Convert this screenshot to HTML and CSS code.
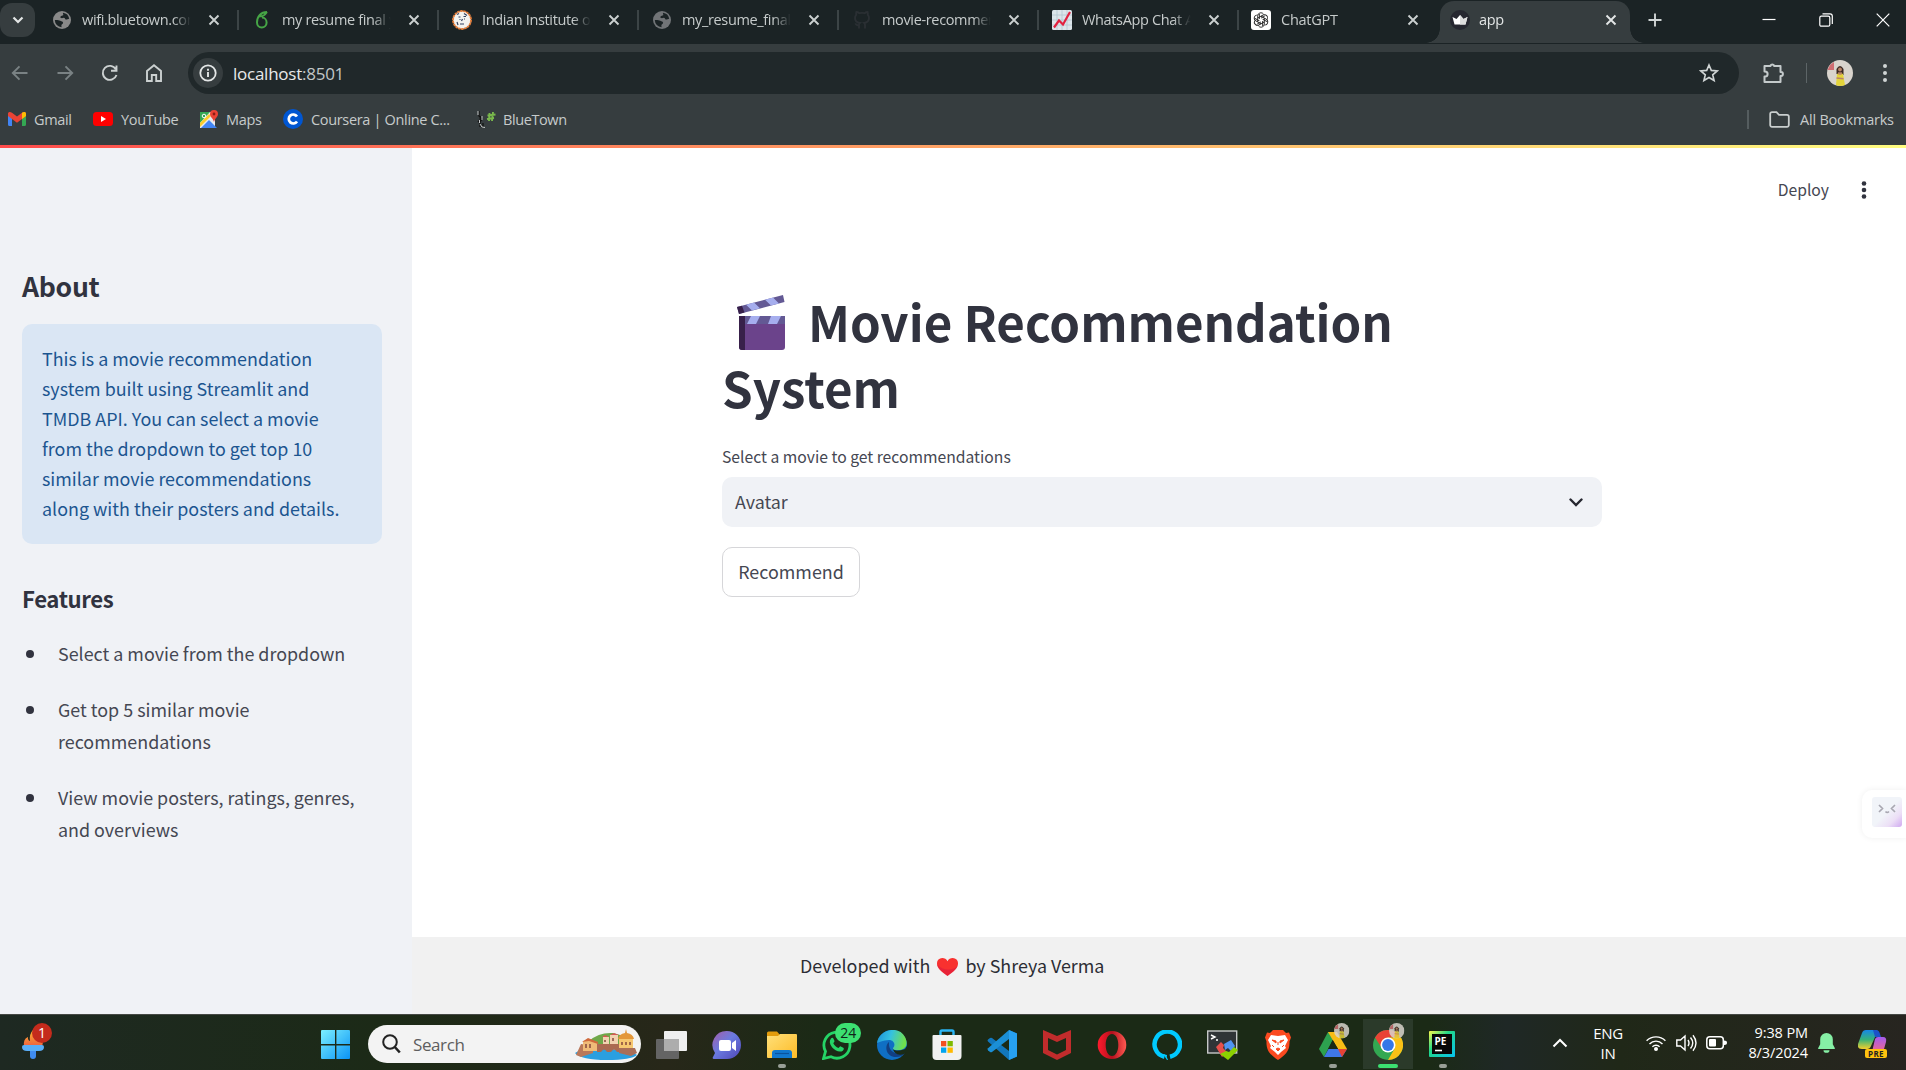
FILE: index.html
```html
<!DOCTYPE html>
<html lang="en">
<head>
<meta charset="utf-8">
<title>app</title>
<link rel="stylesheet" href="styles.css">
</head>
<body>
<svg class="defs" width="0" height="0" aria-hidden="true">
  <defs>
    <symbol id="x" viewBox="0 0 12 12"><path d="M1.5 1.5l9 9M10.5 1.5l-9 9" fill="none" stroke="currentColor" stroke-width="1.9"/></symbol>
    <symbol id="globe" viewBox="0 0 18 18"><circle cx="9" cy="9" r="9" fill="currentColor"/><path d="M10 1.8a7.3 7.3 0 0 1 6.2 6c-1.600.3-2.700 1.200-3.600.6-.8-.5-.5-1.700-1.700-1.700-1 0-1.600.8-2.700.4C7 6.700 7.100 5.700 8.200 5c.8-.4 2-.1 2.100-1.200.1-.8-.6-1.200-.3-2zM1.800 9c1.800-.3 4.200.1 5.500.7 1.400.6 2.700.7 2.800 2 .1 1.300-1.500 1.400-1.700 2.600-.1.700.2 1.300.2 1.900A7.300 7.300 0 0 1 1.800 9z" fill="#1b2325"/></symbol>
    <symbol id="avatar" viewBox="0 0 26 26"><circle cx="13" cy="13" r="13" fill="#d9d4cd"/><path d="M3 5l4-3v8H.5z" fill="#cf6d72"/><path d="M9.500 14V9q3.500-6 7 0v6z" fill="#3b2923"/><circle cx="13" cy="9.500" r="1.900" fill="#b98468"/><path d="M10 14q3-2 6 0l2 11q-5 2-9 0z" fill="#e3d43a"/><path d="M9.500 18l7 .8M12 12v2h2v-2" stroke="#b98468" stroke-width="1.400" fill="none"/></symbol>
    <linearGradient id="gWin" x1="0" y1="0" x2="1" y2="1"><stop offset="0" stop-color="#7cf0ff"/><stop offset="1" stop-color="#0a93f5"/></linearGradient>
    <linearGradient id="gChat" x1="0" y1="0" x2="1" y2="1"><stop offset="0" stop-color="#a45da8"/><stop offset=".45" stop-color="#6b7be0"/><stop offset="1" stop-color="#4f46b8"/></linearGradient>
    <linearGradient id="gFold" x1="0" y1="0" x2="1" y2="1"><stop offset="0" stop-color="#ffe07a"/><stop offset="1" stop-color="#fdbb26"/></linearGradient>
    <linearGradient id="gEdge" x1="0" y1="0" x2="1" y2=".2"><stop offset="0" stop-color="#1b8fd8"/><stop offset=".5" stop-color="#35c1e0"/><stop offset="1" stop-color="#6fe04d"/></linearGradient>
    <linearGradient id="gCop" x1="0" y1="0" x2="0" y2="1"><stop offset="0" stop-color="#1687e8"/><stop offset=".5" stop-color="#35b27a"/><stop offset="1" stop-color="#f4cf2b"/></linearGradient>
    <linearGradient id="gCop2" x1="0" y1="0" x2="0" y2="1"><stop offset="0" stop-color="#a35cf0"/><stop offset="1" stop-color="#f2688a"/></linearGradient>
    <linearGradient id="gOpera" x1="0" y1="0" x2="1" y2="0"><stop offset="0" stop-color="#ff1b2d"/><stop offset=".5" stop-color="#b3101d"/><stop offset="1" stop-color="#ff5a52"/></linearGradient>
    <linearGradient id="gPy" x1="0" y1="0" x2="1" y2="1"><stop offset="0" stop-color="#fcf84a"/><stop offset=".4" stop-color="#21d789"/><stop offset="1" stop-color="#07c3f2"/></linearGradient>
    <linearGradient id="gFace" x1="0" y1="0" x2="1" y2="1"><stop offset=".5" stop-color="#f1f4f9"/><stop offset=".75" stop-color="#ecdff6"/><stop offset="1" stop-color="#cfa8f0"/></linearGradient>
    <linearGradient id="gTorch" x1="0" y1="0" x2="0" y2="1"><stop offset="0" stop-color="#fcb52f"/><stop offset="1" stop-color="#f0623f"/></linearGradient>
  </defs>
</svg>

<header class="browser">
  <div class="tabstrip">
    <button class="tabsearch"><svg width="12" height="8" viewBox="0 0 12 8"><path d="M1.500 1.500L6 6l4.500-4.500" fill="none" stroke="#e3e6e6" stroke-width="2.200"/></svg></button>
    <div class="tab"><svg class="fav" color="#898989"><use href="#globe"/></svg><span class="name">wifi.bluetown.com</span><svg class="x"><use href="#x"/></svg></div>
    <div class="tab"><svg class="fav" viewBox="0 0 18 18"><path d="M14 1C8 1 4 5.500 4 11.500a4.800 5 0 1 0 5-5M6.500 5c2.500 1 5-.5 7.500-4" fill="none" stroke="#46a546" stroke-width="2"/></svg><span class="name">my resume final y</span><svg class="x"><use href="#x"/></svg></div>
    <div class="tab"><svg class="fav big" viewBox="0 0 20 20"><circle cx="10" cy="10" r="9" fill="#f3f3f0" stroke="#e8803c" stroke-width="1.800" stroke-dasharray="2.500 .6"/><path d="M6.500 7h2M11.500 6.500h2.500M7.500 9.500h1M12 9h1M9.500 11l1-2M8 14h4M5 4.500l2-1M12 3.500l3 2M5 12l1 3" stroke="#33415f" stroke-width="1.200"/></svg><span class="name">Indian Institute of</span><svg class="x"><use href="#x"/></svg></div>
    <div class="tab"><svg class="fav" color="#717477"><use href="#globe"/></svg><span class="name">my_resume_final_</span><svg class="x"><use href="#x"/></svg></div>
    <div class="tab"><svg class="fav big" viewBox="0 0 20 20"><path d="M7 18.500v-3M13 18.500v-3.500c0-1-.3-1.600-.8-2 3-.4 4.800-1.800 4.800-5 0-1.300-.4-2.300-1.200-3.100.2-1 .1-2-.2-2.900-1.200 0-2.200.6-3 1.200a10 10 0 0 0-5.200 0c-.8-.6-1.800-1.200-3-1.200-.3.900-.4 1.900-.2 2.900C3.400 5.700 3 6.700 3 8c0 3.200 1.800 4.600 4.800 5-.5.400-.8 1-.8 2-2 .6-3-.1-3.800-1.700" fill="none" stroke="#2a2f33" stroke-width="1.900"/></svg><span class="name">movie-recommend</span><svg class="x"><use href="#x"/></svg></div>
    <div class="tab"><svg class="fav big" viewBox="0 0 20 20"><rect width="20" height="20" rx="1.500" fill="#dce5ea"/><path d="M5 0v20M10 0v20M15 0v20M0 5h20M0 10h20M0 15h20" stroke="#b4c6d0" stroke-width=".8"/><path d="M2 17.500l5-7 4 4L18 2" fill="none" stroke="#e1213f" stroke-width="2.200"/></svg><span class="name tight">WhatsApp Chat A</span><svg class="x"><use href="#x"/></svg></div>
    <div class="tab last"><svg class="fav big" viewBox="0 0 20 20"><rect width="20" height="20" rx="3" fill="#fff"/><g fill="none" stroke="#222" stroke-width=".9"><path id="pt" d="M6.700 11.900V6a3.200 3.200 0 0 1 6-1.600M10 8.100l4.300-2.500"/><use href="#pt" transform="rotate(60 10 10)"/><use href="#pt" transform="rotate(120 10 10)"/><use href="#pt" transform="rotate(180 10 10)"/><use href="#pt" transform="rotate(240 10 10)"/><use href="#pt" transform="rotate(300 10 10)"/></g></svg><span class="name">ChatGPT</span><svg class="x"><use href="#x"/></svg></div>
    <div class="tab active"><svg class="fav big" viewBox="0 0 20 20"><circle cx="10" cy="10" r="10" fill="#262730"/><path d="M2.500 7l4 2L10 5l3.500 4 4-2-2 7.500h-11z" fill="#fff"/><path d="M10 5l3.500 4 4-2-2 7.500H10z" fill="#ddd"/></svg><span class="name">app</span><svg class="x"><use href="#x"/></svg></div>
    <svg class="plus" width="14" height="14" viewBox="0 0 14 14"><path d="M7 .5v13M.5 7h13" stroke="#d0d5d5" stroke-width="1.900"/></svg>
    <div class="winbtns">
      <svg width="14" height="14" viewBox="0 0 14 14"><path d="M.5 6.500h13" stroke="#fff" stroke-width="1.200"/></svg>
      <svg width="14" height="14" viewBox="0 0 14 14"><rect x=".8" y="3.200" width="10" height="10" rx="1.500" fill="none" stroke="#fff" stroke-width="1.200"/><path d="M3.500 .8h7.500a2.300 2.300 0 0 1 2.300 2.300V11" fill="none" stroke="#fff" stroke-width="1.200"/></svg>
      <svg width="14" height="14" viewBox="0 0 14 14"><path d="M.7.700l12.600 12.600M13.300.700L.7 13.300" stroke="#fff" stroke-width="1.200"/></svg>
    </div>
  </div>

  <div class="toolbar">
    <div class="nav">
      <svg width="18" height="16" viewBox="0 0 18 16" stroke="#7a8284"><path d="M16.500 8H2M8.500 1.300L1.800 8l6.700 6.700"/></svg>
      <svg width="18" height="16" viewBox="0 0 18 16" stroke="#7a8284"><path d="M1.500 8H16M9.500 1.300L16.200 8l-6.700 6.700"/></svg>
      <svg width="18" height="18" viewBox="0 0 18 18" stroke="#ccd1d1"><path d="M14.800 5.200A7 7 0 1 0 15.500 11M15.500 1.500v5.300h-5.500"/></svg>
      <svg width="18" height="18" viewBox="0 0 18 18" stroke="#ccd1d1"><path d="M2 17V7l7-5.700L16 7v10h-4.800v-6H6.800v6z"/></svg>
    </div>
    <div class="omnibox">
      <span class="info"><svg width="18" height="18" viewBox="0 0 18 18"><circle cx="9" cy="9" r="7.700" fill="none" stroke="#e3e6e6" stroke-width="1.800"/><path d="M9 8v5M9 4.800v2" stroke="#e3e6e6" stroke-width="1.900"/></svg></span>
      <span class="url">localhost<i>:8501</i></span>
      <svg class="star" width="20" height="20" viewBox="0 0 20 20"><path d="M10 2l2.300 5.400 5.900.5-4.500 3.900 1.400 5.700L10 14.500l-5.100 3 1.400-5.700-4.500-3.900 5.900-.5z" fill="none" stroke="#d0d5d5" stroke-width="1.600"/></svg>
    </div>
    <svg class="puzzle" width="22" height="22" viewBox="0 0 22 22"><path d="M2.500 4h6V3.500a2 1.800 0 0 1 3.600 0V4h6.400v6h.6a1.800 2 0 0 1 0 4h-.6v6h-16v-5.500h.6a2.500 2.500 0 0 0 0-5h-.6z" fill="none" stroke="#c4cacb" stroke-width="2" stroke-linejoin="round"/></svg>
    <span class="vsep"></span>
    <svg class="face" width="26" height="26"><use href="#avatar"/></svg>
    <svg class="kebab" width="6" height="20" viewBox="0 0 6 20" fill="#d0d5d5"><circle cx="3" cy="3" r="2"/><circle cx="3" cy="10" r="2"/><circle cx="3" cy="17" r="2"/></svg>
  </div>

  <div class="bookmarks">
    <svg width="18" height="14" viewBox="0 0 18 14"><path d="M0 1.500h4V14H1.500A1.500 1.500 0 0 1 0 12.500z" fill="#4285f4"/><path d="M14 1.500h4v11a1.500 1.500 0 0 1-1.500 1.500H14z" fill="#34a853"/><path d="M0 1.500C.5-.3 2.500-.3 4 .8L9 4.600 14 .8c1.500-1.100 3.500-1.100 4 .7V4l-9 6.700L0 4z" fill="#ea4335"/><path d="M14 .8c1.500-1.100 3.500-1.100 4 .7V4l-4 3z" fill="#fbbc04"/></svg><span class="b1">Gmail</span>
    <svg width="20" height="14" viewBox="0 0 20 14"><rect width="20" height="14" rx="3.500" fill="#f00"/><path d="M8 4l5 3-5 3z" fill="#fff"/></svg><span class="b2">YouTube</span>
    <svg width="18" height="18" viewBox="0 0 18 18"><path d="M0 2h15v16H0z" fill="#e8eaed"/><path d="M0 2h10L0 13z" fill="#34a853"/><path d="M1 18l8-8 8 8z" fill="#4285f4"/><path d="M0 13l9-9 2 2-11 11z" fill="#fbcd2c"/><path d="M14 0a4 4 0 0 1 4 4c0 3-3 4-4 8-1-4-4-5-4-8a4 4 0 0 1 4-4z" fill="#ea4335"/><circle cx="14" cy="4" r="1.400" fill="#8c1d14"/><circle cx="4" cy="6" r="1.800" fill="none" stroke="#fff"/></svg><span class="b3">Maps</span>
    <svg width="20" height="20" viewBox="0 0 20 20"><circle cx="10" cy="10" r="10" fill="#0056d2"/><path d="M14 7.500a4.500 4.500 0 1 0 0 5" fill="none" stroke="#fff" stroke-width="2.700"/></svg><span class="b4">Coursera | Online C...</span>
    <svg width="19" height="19" viewBox="0 0 19 19"><path d="M2 1v5l3 3-2 3v5M4 6l-1 3M6 13v5M1 12l3-3" stroke="#111" stroke-width="1.300" fill="none"/><path d="M1 1v4M5 6v4M3 14l2 3 3 .5M2.500 10v3" stroke="#c6caca" stroke-width="1" fill="none"/><path d="M12.500 3l-.5 8M16 2l-1 9M10.500 5.500l8-1M10 9l7-1" stroke="#79b84c" stroke-width="1.900"/></svg><span class="b5">BlueTown</span>
    <span class="allsep"></span>
    <svg width="21" height="17" viewBox="0 0 21 17"><path d="M1.200 3A1.800 1.800 0 0 1 3 1.200h4.500L10 3.800h8A1.800 1.800 0 0 1 19.800 5.600V14A1.800 1.800 0 0 1 18 15.800H3A1.800 1.800 0 0 1 1.200 14z" fill="none" stroke="#c9cece" stroke-width="1.800"/></svg><span class="all">All Bookmarks</span>
  </div>
</header>
<div class="decoration"></div>

<div class="app">
  <aside class="sidebar">
    <h2>About</h2>
    <p class="note">This is a movie recommendation<br>system built using Streamlit and<br>TMDB API. You can select a movie<br>from the dropdown to get top 10<br>similar movie recommendations<br>along with their posters and details.</p>
    <h3>Features</h3>
    <ul>
      <li>Select a movie from the dropdown</li>
      <li>Get top 5 similar movie<br>recommendations</li>
      <li>View movie posters, ratings, genres,<br>and overviews</li>
    </ul>
  </aside>
  <main class="main">
    <div class="appbar"><span>Deploy</span><svg width="6" height="18" viewBox="0 0 6 18" fill="#31333f"><circle cx="3" cy="2.500" r="2.300"/><circle cx="3" cy="9" r="2.300"/><circle cx="3" cy="15.500" r="2.300"/></svg></div>
    <section class="block">
      <h1><svg class="clap" width="50" height="56" viewBox="0 0 50 56"><path d="M3 46V23h46v29a3 3 0 0 1-3 3H6a3 3 0 0 1-3-3z" fill="#6b438b"/><path d="M3 21h6v34H6a3 3 0 0 1-3-3z" fill="#38204a"/><path d="M9 21h40v8H9z" fill="#635994"/><path d="M15 21h9l-4 8h-9zM35 21h10l-4 8h-9z" fill="#a6aeee"/><path d="M1 12L47 0l1.500 7L3 19z" fill="#635994"/><path d="M1 12l5-1.300L8.500 17.500 3 19z" fill="#38204a"/><path d="M10 9.700l8-2.100 6 5.600-8 2.200zM29 4.700l8-2.100 6 5.800-8 2.200z" fill="#a6aeee"/></svg><span>Movie Recommendation</span><br><span>System</span></h1>
      <label>Select a movie to get recommendations</label>
      <div class="select"><span>Avatar</span><svg width="14" height="9" viewBox="0 0 14 9"><path d="M1.500 1.500L7 7l5.500-5.500" fill="none" stroke="#262730" stroke-width="2.400" stroke-linecap="round"/></svg></div>
      <button class="recommend">Recommend</button>
    </section>
    <footer>
      <span>Developed with</span><svg width="21" height="18" viewBox="0 0 21 18"><path d="M10.500 18C4 13 0 10 0 5.400A5.200 5.200 0 0 1 5.200 0c2.300 0 4.300 1.200 5.300 3.200C11.500 1.200 13.500 0 15.800 0A5.200 5.200 0 0 1 21 5.400C21 10 17 13 10.500 18z" fill="#f8312f"/><path d="M0 6c.5 4 4 7 10.500 12C15 14.500 19 12 20.500 8 16 13 5 13 0 6z" fill="#ca0b4a" opacity=".35"/></svg><span>by Shreya Verma</span>
    </footer>
  </main>
</div>

<div class="assistant"><svg width="32" height="32" viewBox="0 0 32 32"><rect x="1" y="1" width="30" height="30" rx="3" fill="url(#gFace)"/><path d="M8 9l3.500 3.500L8 16M24 9l-3.500 3.500L24 16M14.500 15.500q1.700 2 3.400 0" fill="none" stroke="#a9a8b2" stroke-width="1.700"/></svg></div>

<div class="taskbar">
  <div class="widget"><svg width="26" height="30" viewBox="0 0 26 30"><path d="M4 16Q3 9 8 7q-.5 3 2 4Q9 4 13 0l8 8q3 4 1 8z" fill="url(#gTorch)"/><path d="M2 17q0-2 2-2h18q2 0 2 2 0 4-5 4H7q-5 0-5-4z" fill="#5aaef8"/><path d="M10 21h6v5q0 3-3 3t-3-3z" fill="#3f8cf0"/></svg><b class="badge">1</b></div>
  <svg class="start" width="30" height="30" viewBox="0 0 30 30" fill="url(#gWin)"><path d="M0 1a1 1 0 0 1 1-1h13v14H0zM15.400 0H28a1 1 0 0 1 1 1v13H15.400zM0 15.400h14V29H1a1 1 0 0 1-1-1zM15.400 15.400H29V28a1 1 0 0 1-1 1H15.400z"/></svg>
  <div class="search"><svg width="19" height="20" viewBox="0 0 19 20"><circle cx="8" cy="8" r="6.800" fill="none" stroke="#222" stroke-width="2"/><path d="M12.800 13l5 5.500" stroke="#222" stroke-width="2.600"/></svg><span>Search</span>
    <svg class="town" width="62" height="31" viewBox="0 0 62 31"><path d="M14 12Q24 3 38 4l14 4v12H12z" fill="#6fa84a"/><path d="M0 24l9-5 45 2 8 5q-6 5-30 5-26 0-32-7z" fill="#2a9fe0"/><path d="M6 15l12 2v7l-12 4-5-2z" fill="#b9785a"/><path d="M8 12l5-2 9 3v9H8z" fill="#f0bb78"/><path d="M7 13l6-4 10 4v2l-9-3z" fill="#cf6a3c"/><path d="M22 15h24v8h-4q-3-5-6 0h-4q-3-5-6 0h-4z" fill="#ab6a51"/><path d="M28 8h6v7h-6zM35 6h8v9h-8z" fill="#f2d2b0"/><path d="M27 8l3-2 4 2zM35 6l4-2 5 2z" fill="#d35a55"/><path d="M44 9h14v11H44z" fill="#f6c771"/><path d="M43 10q1-5 7-6l1-4 1 4q6 1 7 6z" fill="#e3973a"/><path d="M44 19l16 0 2 5-6 3-12-3z" fill="#a96e58"/><path d="M11 15v4M15 15v4M30 11v2M38 9v3M47 13v3M51 13v3M55 13v3" stroke="#85483c" stroke-width="1.500"/></svg>
  </div>
  <div class="apps">
    <div><svg width="31" height="30" viewBox="0 0 31 30"><rect x="0" y="9" width="23" height="20" rx="1" fill="#646464"/><rect x="8" y="1" width="23" height="20" rx="1" fill="#efefef"/><path d="M8 9h15v12H8z" fill="#adadad"/></svg></div>
    <div><svg width="30" height="30" viewBox="0 0 30 30"><path d="M15 1a14 14 0 1 1 0 28H2q-2 0-1-2l2-4A14 14 0 0 1 15 1z" fill="url(#gChat)"/><rect x="7" y="10" width="12" height="11" rx="2" fill="#fff"/><path d="M20 13l4-3v11l-4-3z" fill="#fff"/></svg></div>
    <div class="run"><svg width="30" height="30" viewBox="0 0 30 30"><path d="M0 3a1.500 1.500 0 0 1 1.500-1.500H10L13 5v4H0z" fill="#e39c0c"/><path d="M0 6h11l2-2h16a1 1 0 0 1 1 1v22a1 1 0 0 1-1 1H1a1 1 0 0 1-1-1z" fill="url(#gFold)"/><path d="M5 28v-5q0-3 3-3h14q3 0 3 3v5z" fill="#1178cf"/><path d="M8 23.500h14" stroke="#0a539e" stroke-width="1.200"/></svg></div>
    <div><svg width="30" height="30" viewBox="0 0 30 30"><path d="M1.500 28.500l2-7.200A13 13 0 1 1 9 26.700z" fill="none" stroke="#25d366" stroke-width="2.800"/><path d="M9 8.500c1-1 2-.8 2.500.2l1 2.300c.2.800-1 1.800-1.200 2.300 1 2.200 2.800 3.800 5.200 4.700.8-.3 1.300-2 2.300-1.600l2.500 1.300c1 .5.300 2.300-.5 3-3 2.500-8.500-.6-10.800-3.500C7.500 14 7 11 9 8.500z" fill="#25d366"/></svg><b class="badge green">24</b></div>
    <div><svg width="30" height="30" viewBox="0 0 30 30"><circle cx="15" cy="15" r="15" fill="#0f6fc4"/><path d="M0 13C2-1 22-5 28 7c4 8 0 12-5 13-5 .6-8-.7-7-2 3-3 1-8-4-8-6 0-11 3-12 3z" fill="url(#gEdge)"/><path d="M12 12c-5 4-3 15 7 15 4 0 6-1 8-3 1-2 0-2-2-1-7 2-14-2-13-11z" fill="#123f82"/><path d="M16 18c-1 2 4 4 12 1l2-3v6l-3 2c-6 2-11-1-11-6z" fill="#1a2b17"/></svg></div>
    <div><svg width="30" height="31" viewBox="0 0 30 31"><path d="M8.500 7V3q0-1.500 1.500-1.500h10q1.500 0 1.500 1.500v4" fill="none" stroke="#2ab4f4" stroke-width="2.400"/><path d="M.5 7q0-1 1-1h27q1 0 1 1v20a4 4 0 0 1-4 4h-21a4 4 0 0 1-4-4z" fill="#f1f1f1"/><path d="M9 12h5.300v5.300H9z" fill="#f25022"/><path d="M15.500 12h5.300v5.300h-5.300z" fill="#7fba00"/><path d="M9 18.500h5.300v5.300H9z" fill="#00a4ef"/><path d="M15.500 18.500h5.300v5.300h-5.300z" fill="#ffb900"/></svg></div>
    <div><svg width="30" height="30" viewBox="0 0 30 30"><path d="M22 0l8 3.500v23L22 30 1 11.500q-1-1 0-2L3 8q1-.6 2 0l17 13z" fill="#1277bd"/><path d="M22 0v9L5 22q-1 .7-2 0l-2-1.700q-1-1 0-2z" fill="#1b8fd6"/><path d="M22 0l8 3.500v23L22 30z" fill="#27a1f2"/></svg></div>
    <div><svg width="28" height="30" viewBox="0 0 28 30"><path d="M0 0l14 6L28 0v23l-14 7-14-7zM5 8v12l9 4.500 9-4.500V8l-9 4z" fill="#c12c2c" fill-rule="evenodd"/></svg></div>
    <div><svg width="30" height="30" viewBox="0 0 30 30"><path d="M15 1a14.300 14 0 1 0 0 28 14.300 14 0 0 0 0-28zM15 4c4 0 6.300 5 6.300 11S19 26 15 26 8.700 21 8.700 15 11 4 15 4z" fill="url(#gOpera)" fill-rule="evenodd"/></svg></div>
    <div><svg width="30" height="30" viewBox="0 0 30 30"><path d="M12.500 26.700A12.700 12.700 0 1 1 18 26.700" fill="none" stroke="#00caff" stroke-width="4.500"/><path d="M11 24l4 6h1q-2-3-1-5z" fill="#00caff"/></svg></div>
    <div><svg width="31" height="30" viewBox="0 0 31 30"><rect x=".7" y="1" width="29" height="22" fill="#303437" stroke="#c6c8c8" stroke-width="1.400"/><path d="M4 5l4 2-4 2M9 10h2" stroke="#fff" fill="none" stroke-width="1.400"/><path d="M9 17l5-5 3 3-1 3 4 4-5 5z" fill="#e8504c"/><path d="M17 14l7-4 4 6-4 5-3-3-3 2z" fill="#5094f2"/><path d="M13 24l6-3 3 1 5-5 4 3-10 10z" fill="#8bd100"/></svg></div>
    <div><svg width="26" height="30" viewBox="0 0 26 30"><path d="M8 0h10l3 3 3-.5 2 5-1.500 4c.5 10-5 14-11.500 18.500C6.500 25.500 1 21.500 1.500 11.500L0 7.500l2-5L5 3z" fill="#fb4a20"/><path d="M6 5l7 1 7-1 3 5-3 6 1 2-5 4-3 3-3-3-5-4 1-2-3-6z" fill="#fff"/><path d="M7 10l4 1v2zM19 10l-4 1v2zM11 19l2-1 2 1-2 2zM13 12v3M7 15l2 2M19 15l-2 2" fill="#fb4a20" stroke="#fb4a20"/></svg></div>
    <div class="run"><svg width="28" height="26" viewBox="0 0 28 26"><path d="M9 0h9L5 25 0 17z" fill="#2da14f"/><path d="M9 0h9l10 17h-9z" fill="#f8bc15"/><path d="M5 25l4.500-8H28l-5 8z" fill="#3f78e8"/><path d="M19 17h9l-5 8z" fill="#e64234"/><path d="M13.700 8l5.300 9H9z" fill="#1b2a16"/></svg><svg class="mini"><use href="#avatar"/></svg></div>
    <div class="current"><svg width="30" height="30" viewBox="0 0 30 30"><circle cx="15" cy="15" r="15" fill="#33a852"/><path d="M2 7.500A15 15 0 0 1 28 7.500H15L9 18.500z" fill="#e94335"/><path d="M28 7.500A15 15 0 0 1 15 30l6.500-11.200L15 7.500z" fill="#fbc116"/><circle cx="15" cy="15" r="7.500" fill="#fff"/><circle cx="15" cy="15" r="5.900" fill="#3577e8"/></svg><svg class="mini"><use href="#avatar"/></svg></div>
    <div class="run"><svg width="27" height="27" viewBox="0 0 27 27"><rect width="26" height="26" rx="1" fill="url(#gPy)"/><rect x="3" y="3" width="20" height="20" fill="#080808"/><path d="M6 19.500h7" stroke="#fff" stroke-width="1.600"/><text x="5.500" y="13.500" fill="#fff" font-family="Open Sans, sans-serif" font-size="10" font-weight="700">PE</text></svg></div>
  </div>
  <div class="tray">
    <svg width="16" height="10" viewBox="0 0 16 10"><path d="M1.500 8.500L8 2l6.500 6.500" fill="none" stroke="#fff" stroke-width="2"/></svg>
    <div class="lang">ENG<br>IN</div>
    <svg class="wifi" width="20" height="16" viewBox="0 0 20 16" fill="none" stroke="#fff" stroke-width="1.400"><path d="M.6 5.800a13.300 13.300 0 0 1 18.800 0M3.500 8.900a9 9 0 0 1 13 0M6.400 11.800a5 5 0 0 1 7.200 0"/><circle cx="10" cy="14" r="1.300" fill="#fff"/></svg>
    <svg class="vol" width="21" height="18" viewBox="0 0 21 18" fill="none" stroke="#fff" stroke-width="1.400"><path d="M.8 6v6h3.700L9 16V2L4.500 6zM12 6q2 3 0 6M14.500 3.500q4.500 5.500 0 11M17 1.300q6 7.700 0 15.400"/></svg>
    <svg class="bat" width="21" height="14" viewBox="0 0 21 14"><rect x=".8" y=".8" width="16.500" height="12" rx="3" fill="none" stroke="#fff" stroke-width="1.500"/><rect x="3" y="3" width="7" height="7.600" rx="1" fill="#fff"/><path d="M18 4.500q3 0 3 2.300t-3 2.200z" fill="#fff"/></svg>
    <div class="clock">9:38 PM<br>8/3/2024</div>
    <svg class="bell" width="17" height="20" viewBox="0 0 17 20"><path d="M8.500 0a6.300 6.300 0 0 1 6.300 6.300v5l2 3.700q.3 1-.8 1H1q-1.100 0-.8-1l2-3.700v-5A6.300 6.300 0 0 1 8.500 0zM5.500 17.200h6a3 2.600 0 0 1-6 0z" fill="#86efa5"/></svg>
    <div class="copilot"><svg width="30" height="28" viewBox="0 0 30 28"><path d="M8 1h9q3 0 4 3l1 4h-5l-4 9q-1 3-4 3H4q-5 0-4-5L4 4q1-3 4-3z" fill="url(#gCop)"/><path d="M15 1h3q3 0 4 4l1 3h-6z" fill="#1c52c8"/><path d="M17 10q1-2 3-2h5q4 0 3 5l-2 7q-1 3-4 3h-8z" fill="url(#gCop2)"/></svg><b>PRE</b></div>
  </div>
</div>
</body>
</html>
```

FILE: styles.css
```css
* { box-sizing: border-box; }
body {
  margin: 0;
  width: 1906px;
  height: 1070px;
  overflow: hidden;
  display: flex;
  flex-direction: column;
  position: relative;
  font-family: "Open Sans", "Noto Sans", sans-serif;
}
svg { display: block; flex: none; }
.defs { position: absolute; }
button { font: inherit; border: 0; padding: 0; }
i { font-style: normal; }

/* Browser window */
.browser { height: 145px; flex: none; background: #363d3f; color: #c6cbcb; }
.tabstrip { height: 44px; background: #1b2325; display: flex; align-items: center; padding-bottom: 5px; }
.tabsearch { width: 35px; height: 34px; margin-right: 4px; border-radius: 12px; background: #363d3f; display: grid; place-items: center; }
.tab { width: 200px; height: 34px; display: flex; align-items: center; padding-left: 14px; position: relative; font-size: 14.5px; flex: none; }
.tab:not(.active):not(.last)::after { content: ""; width: 2px; height: 20px; background: #3c4446; margin-left: 17px; }
.fav { width: 18px; height: 18px; }
.fav.big { width: 20px; height: 20px; margin: 0 -1px; }
.name { width: 112px; margin-left: 11px; white-space: nowrap; overflow: hidden; letter-spacing: -.35px; -webkit-mask: linear-gradient(90deg, #000 82%, transparent 98%); mask: linear-gradient(90deg, #000 82%, transparent 98%); }
.x { width: 12px; height: 12px; margin-left: 15px; color: #cbd0d0; }
.tab.last { padding-left: 13px; width: 199px; }
.tab.last .name { letter-spacing: -.25px; }
.tab.last .x { margin-left: 14px; }
.tab.active { width: 190px; height: 42px; margin: 5px 0 0 2px; padding: 0 0 5px 11px; background: #363d3f; border-radius: 14px 14px 0 0; color: #e3e6e6; }
.tab.active::before, .tab.active::after { content: ""; position: absolute; bottom: 0; width: 14px; height: 14px; }
.tab.active::before { left: -14px; background: radial-gradient(circle at 0 0, transparent 13.5px, #363d3f 14px); }
.tab.active::after { right: -14px; background: radial-gradient(circle at 100% 0, transparent 13.5px, #363d3f 14px); }
.tab.active .name { margin-left: 10px; }
.tab.active .x { color: #e3e6e6; margin-left: 14px; }
.plus { margin-left: 18px; }
.winbtns { display: flex; gap: 43px; margin: 0 16px 0 auto; }

.toolbar { height: 58px; display: flex; align-items: center; }
.nav { display: flex; align-items: center; width: 188px; padding-left: 11px; gap: 26.8px; }
.nav svg { fill: none; stroke-width: 1.9; }
.omnibox { width: 1551px; height: 42px; border-radius: 21px; background: #20282a; display: flex; align-items: center; padding: 0 20px 0 5px; }
.info { width: 30px; height: 30px; border-radius: 50%; background: #363d3f; display: grid; place-items: center; }
.url { margin-left: 10px; font-size: 17px; color: #e8eaea; letter-spacing: -.25px; }
.url i { color: #c0c6c7; }
.star { margin-left: auto; }
.puzzle { margin-left: 23px; }
.vsep { width: 1px; height: 20px; background: #5d6567; margin-left: 22px; }
.face { margin-left: 20px; }
.kebab { margin-left: 29px; }
.bookmarks { height: 34px; display: flex; align-items: center; padding-left: 8px; font-size: 14.5px; letter-spacing: -.33px; white-space: nowrap; }
.bookmarks span { margin-left: 8px; }
.bookmarks .b1 { width: 59px; }
.bookmarks .b2 { width: 79px; }
.bookmarks .b3 { width: 57px; }
.bookmarks .b4 { width: 166px; }
.bookmarks .b5 { margin-left: 7px; letter-spacing: -.4px; }
.bookmarks .allsep { width: 2px; height: 19px; background: #555d5f; margin: 0 20px 0 auto; }
.bookmarks .all { width: 106px; margin-left: 10px; letter-spacing: -.22px; }
.decoration { height: 3px; flex: none; background: linear-gradient(90deg, #ff4b4b, #fffd80); }

/* Page */
.app { height: 866px; display: flex; font-family: "Noto Sans CJK SC", "Noto Sans", sans-serif; color: #454752; font-size: 17.9px; white-space: nowrap; }
.sidebar { width: 412px; background: #f0f2f6; padding: 116px 30px 0 22px; }
h1, h2, h3, p, ul { margin: 0; }
h1, h2, h3 { color: #31333f; }
h2 { font-size: 26.6px; line-height: 44px; font-weight: 600; letter-spacing: -.3px; }
.note { margin-top: 16px; height: 220px; padding: 19px 20px; border-radius: 10px; background: #dae6f4; color: #1c5590; line-height: 30px; }
h3 { margin-top: 36px; font-size: 22.2px; line-height: 36px; font-weight: 600; letter-spacing: -.4px; }
ul { margin-top: 21px; padding: 0; line-height: 32px; list-style: none; }
li { margin-bottom: 24px; display: flex; }
li::before { content: ""; width: 8px; height: 8px; border-radius: 50%; background: #31333f; margin: 13px 24px 0 4px; flex: none; }
.main { flex: 1; background: #fff; display: flex; flex-direction: column; }
.appbar { display: flex; justify-content: flex-end; align-items: center; height: 84px; padding-right: 39px; gap: 32px; font-size: 15.7px; }
.appbar span { padding-bottom: 1px; }
.block { margin: 56px 0 0 310px; width: 880px; }
h1 { font-size: 49.2px; line-height: 66px; font-weight: 700; }
.clap { display: inline-block; vertical-align: -9px; margin: 0 22px 0 14px; }
label { display: block; margin-top: 25px; font-size: 15.7px; line-height: 24px; }
.select { margin-top: 8px; height: 50px; border-radius: 10px; background: #f0f2f6; display: flex; align-items: center; justify-content: space-between; padding: 0 19px 0 13px; }
.select span { padding-bottom: 3px; }
.recommend { margin-top: 20px; width: 138px; height: 50px; border: 1px solid #d6d6d9; border-radius: 10px; background: #fff; color: #454752; padding-bottom: 3px; }
footer { margin-top: auto; height: 77px; background: #f1f1f1; color: #2c2d34; display: flex; padding: 15px 0 0 388px; gap: 7px; line-height: 26px; }
footer svg { margin-top: 6px; }
.assistant { position: absolute; right: 0; top: 790px; width: 44px; height: 48px; padding: 6px 0 0 9px; background: #fff; border-radius: 10px 0 0 10px; box-shadow: 0 0 6px #0001; }

/* Taskbar */
.taskbar { height: 56px; display: flex; align-items: center; background: linear-gradient(90deg, #1e2922, #1c2a17 20%, #272719 35%, #1b2a16 43%, #1b2a16 75%, #1f2826 79%, #202818 85%, #272520); border-top: 1px solid #454844; color: #fff; }
.widget { position: relative; width: 321px; padding: 4px 0 0 20px; }
.badge { position: absolute; left: 32px; top: -3px; width: 20px; height: 20px; border-radius: 10px; background: #c42b1c; font-size: 14px; line-height: 20px; text-align: center; font-weight: 400; }
.start { margin-top: 4px; }
.search { width: 273px; height: 38px; border-radius: 19px; background: #f3f3f3; display: flex; align-items: center; margin: 3px 3px 0 17px; padding: 0 4px 0 14px; color: #5e5e5e; font-size: 17px; letter-spacing: -.4px; }
.search span { margin-left: 12px; }
.town { margin-left: auto; }
.apps { display: flex; }
.apps > div { width: 55.1px; height: 55px; display: grid; place-items: center; padding-top: 4px; position: relative; }
.apps .badge.green { top: 8px; left: 26px; width: 26px; height: 20px; line-height: 20px; font-size: 14px; background: #3ce071; color: #10241a; }
.mini { position: absolute; width: 20px; height: 20px; top: 8px; left: 29px; opacity: .85; }
.mini use { transform: scale(.77); }
.apps > .current { background: linear-gradient(#2b3a2a, #2b3a2a) center 4px / 50px 50px no-repeat; }
.run::after, .current::after { content: ""; position: absolute; bottom: 2px; left: 24px; width: 8px; height: 4px; border-radius: 2px; background: #999f97; }
.current::after { left: 18px; width: 20px; background: #3ce071; }
.tray { margin-left: auto; display: flex; align-items: center; padding-right: 18px; font-size: 14.5px; line-height: 20px; letter-spacing: -.3px; }
.tray > svg:first-child { margin-left: 1px; }
.lang { width: 50px; margin-left: 15px; text-align: center; font-size: 15px; }
.wifi { margin-left: 13px; }
.vol { margin-left: 10px; }
.bat { margin-left: 9px; }
.clock { width: 72px; margin-left: 9px; text-align: right; white-space: nowrap; letter-spacing: -.1px; }
.bell { margin-left: 10px; }
.copilot { position: relative; margin-left: 23px; }
.copilot b { position: absolute; left: 7px; bottom: -1px; width: 22px; height: 9px; border-radius: 2px; background: #ffc20e; color: #222; font-size: 8px; line-height: 9px; letter-spacing: .4px; text-align: center; }
```
